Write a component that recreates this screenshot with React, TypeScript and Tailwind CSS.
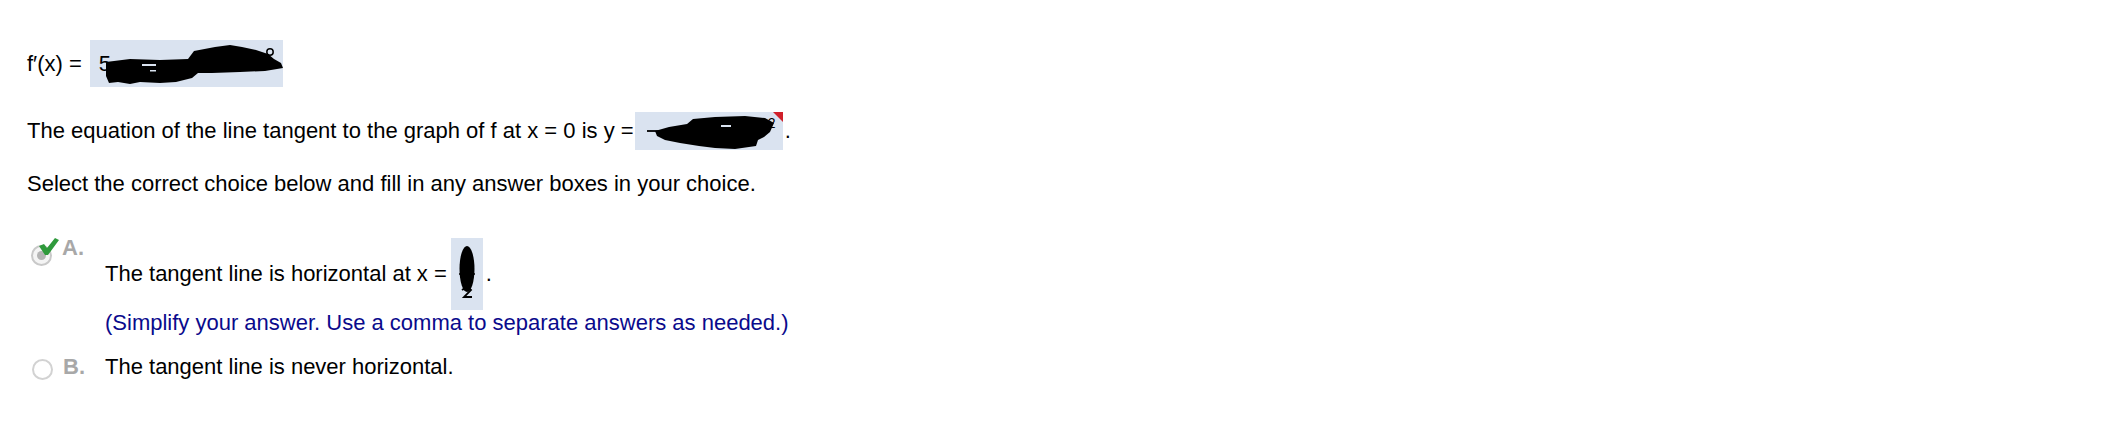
import React from "react";

function Box1() {
  return (
    <span className="relative inline-block w-[193px] h-[47px] bg-[#dae3f0] ml-[8px]">
      <span className="absolute left-[9px] top-[11px] text-[22px] leading-[26px]">5</span>
      <svg className="absolute left-0 top-0" width="193" height="47" viewBox="0 0 193 47">
        <path
          d="M16 22 L40 19 L70 20 L98 19 L104 11 L125 7 L140 5 L152 7 L166 10 L178 14 L184 19 L191 23 L193 28 L175 31 L150 32 L122 33 L108 33 L102 38 L86 42 L70 43 L50 42 L40 44 L28 42 L19 43 L16 36 Z"
          fill="#000"
        />
        <rect x="52" y="24" width="14" height="2" fill="#dae3f0" />
        <rect x="60" y="30" width="6" height="1.5" fill="#dae3f0" />
        <circle cx="180" cy="12" r="3.2" fill="none" stroke="#000" strokeWidth="1.5" />
      </svg>
    </span>
  );
}

function Box2() {
  return (
    <span className="relative inline-block w-[148px] h-[38px] bg-[#dae3f0] ml-[1px]">
      <svg className="absolute left-0 top-0" width="148" height="38" viewBox="0 0 148 38">
        <line x1="12" y1="19" x2="28" y2="19" stroke="#000" strokeWidth="1.8" />
        <path
          d="M20 19 L34 15 L52 12 L58 7 L80 5 L110 4 L130 6 L139 11 L135 20 L129 25 L123 28 L121 34 L100 37 L80 36 L64 34 L45 31 L30 28 L22 24 Z"
          fill="#000"
        />
        <rect x="86" y="13" width="10" height="2" fill="#dae3f0" />
        <polygon points="138,0 148,0 148,10" fill="#d0202a" />
      </svg>
      <span className="absolute left-[133px] top-[4px] text-[14px] leading-[15px]">2</span>
    </span>
  );
}

function Box3() {
  return (
    <span className="relative inline-block w-[32px] h-[72px] bg-[#dae3f0] ml-[4px]">
      <svg className="absolute left-0 top-0" width="32" height="72" viewBox="0 0 32 72">
        <ellipse cx="16" cy="31" rx="7.5" ry="23" fill="#000" />
        <line x1="8" y1="36" x2="24" y2="36" stroke="#000" strokeWidth="1.5" />
        <path d="M11 52 Q16 48 20 52 L13 59 L21 59" fill="none" stroke="#000" strokeWidth="1.8" />
      </svg>
    </span>
  );
}

export default function App() {
  return (
    <div className="w-[2108px] h-[448px] bg-white font-['Liberation_Sans',Arial,sans-serif] text-[22px] leading-[26px] text-black pl-[27px] pt-[40px]">
      <div className="flex items-center h-[47px]">
        <span>f′(x) =</span>
        <Box1 />
      </div>

      <div className="flex items-center h-[38px] mt-[25px]">
        <span>The equation of the line tangent to the graph of f at x = 0 is y =</span>
        <Box2 />
        <span className="ml-[2px]">.</span>
      </div>

      <div className="mt-[21px]">Select the correct choice below and fill in any answer boxes in your choice.</div>

      <div className="flex items-start mt-[38px]">
        <div className="w-[78px] flex items-center h-[26px]">
          <span className="relative ml-[4px] mt-[14px] w-[21px] h-[21px] rounded-full border-2 border-[#c9c9c9] bg-[#f4f4f4] flex items-center justify-center">
            <span className="w-[9px] h-[9px] rounded-full bg-[#b4b4b4]" />
            <svg className="absolute left-[5px] top-[-10px]" width="22" height="20" viewBox="0 0 22 20">
              <path d="M1 9 L6 7 L9 11 L17 1 L21 3 L10 18 L7 18 Z" fill="#2f9a3c" />
            </svg>
          </span>
          <span className="ml-[10px] font-bold text-[#a8a8a8]">A.</span>
        </div>
        <div className="flex flex-col mt-[3px]">
          <div className="flex items-center h-[72px]">
            <span>The tangent line is horizontal at x =</span>
            <Box3 />
            <span className="ml-[3px]">.</span>
          </div>
          <div className="text-[#0a0a8c]">(Simplify your answer. Use a comma to separate answers as needed.)</div>
        </div>
      </div>

      <div className="flex items-center mt-[18px] h-[26px]">
        <div className="w-[78px] flex items-center">
          <span className="ml-[5px] mt-[4px] w-[21px] h-[21px] rounded-full border-2 border-[#d2d2d2] bg-white" />
          <span className="ml-[10px] font-bold text-[#a8a8a8]">B.</span>
        </div>
        <span>The tangent line is never horizontal.</span>
      </div>
    </div>
  );
}
